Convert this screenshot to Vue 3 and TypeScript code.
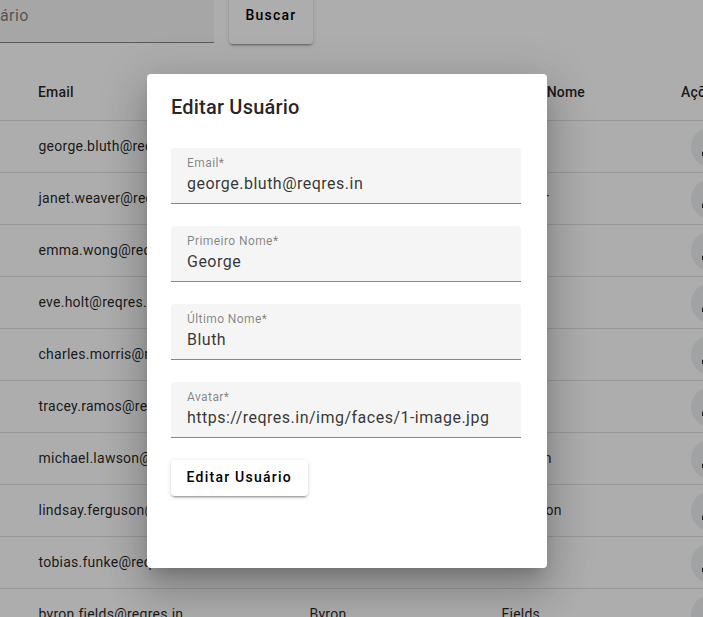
<script setup lang="ts">
interface User {
  email: string
  first: string
  last: string
}

interface Field {
  label: string
  value: string
}

const users: User[] = [
  { email: 'george.bluth@reqres.in', first: 'George', last: 'Bluth' },
  { email: 'janet.weaver@reqres.in', first: 'Janet', last: 'Weaver' },
  { email: 'emma.wong@reqres.in', first: 'Emma', last: 'Wong' },
  { email: 'eve.holt@reqres.in', first: 'Eve', last: 'Holt' },
  { email: 'charles.morris@reqres.in', first: 'Charles', last: 'Morris' },
  { email: 'tracey.ramos@reqres.in', first: 'Tracey', last: 'Ramos' },
  { email: 'michael.lawson@reqres.in', first: 'Michael', last: 'Lawson' },
  { email: 'lindsay.ferguson@reqres.in', first: 'Lindsay', last: 'Ferguson' },
  { email: 'tobias.funke@reqres.in', first: 'Tobias', last: 'Funke' },
  { email: 'byron.fields@reqres.in', first: 'Byron', last: 'Fields' },
]

const fields: Field[] = [
  { label: 'Email*', value: 'george.bluth@reqres.in' },
  { label: 'Primeiro Nome*', value: 'George' },
  { label: 'Último Nome*', value: 'Bluth' },
  { label: 'Avatar*', value: 'https://reqres.in/img/faces/1-image.jpg' },
]
</script>

<template>
  <main class="page">
    <div class="toolbar">
      <div class="search">ário</div>
      <button class="raised buscar" type="button">Buscar</button>
    </div>
    <div class="table">
      <div class="row head">
        <span>Email</span>
        <span>Primeiro Nome</span>
        <span>Último Nome</span>
        <span>Ações</span>
      </div>
      <div v-for="user in users" :key="user.email" class="row">
        <span class="cell">{{ user.email }}</span>
        <span class="cell">{{ user.first }}</span>
        <span class="cell">{{ user.last }}</span>
        <button class="fab" type="button" aria-label="Editar">
          <svg viewBox="0 0 24 24" width="24" height="24">
            <path d="M3 17.25V21h3.75L17.81 9.94l-3.75-3.75L3 17.25zM20.71 7.04a1 1 0 0 0 0-1.41l-2.34-2.34a1 1 0 0 0-1.41 0l-1.83 1.83 3.75 3.75 1.83-1.83z" />
          </svg>
        </button>
      </div>
    </div>
    <div class="backdrop">
      <section class="dialog" role="dialog">
        <h2>Editar Usuário</h2>
        <label v-for="field in fields" :key="field.label" class="field">
          <span class="label">{{ field.label }}</span>
          <input type="text" :value="field.value" />
        </label>
        <button class="raised submit" type="button">Editar Usuário</button>
      </section>
    </div>
  </main>
</template>

<style>
body {
  margin: 0;
  overflow: hidden;
}
</style>

<style scoped>
.page {
  position: relative;
  width: 703px;
  height: 617px;
  overflow: hidden;
  box-sizing: border-box;
  background: #fff;
  font-family: Roboto, sans-serif;
  color: rgba(0, 0, 0, 0.87);
}

.toolbar {
  display: flex;
  align-items: flex-start;
  gap: 15px;
  height: 64px;
}

.search {
  box-sizing: border-box;
  width: 214px;
  height: 43px;
  padding-top: 4px;
  border-bottom: 1px solid rgba(0, 0, 0, 0.46);
  background: #f5f5f5;
  color: rgba(0, 0, 0, 0.52);
  font-size: 16px;
  line-height: 24px;
  letter-spacing: 0.4px;
}

.raised {
  box-sizing: border-box;
  height: 36px;
  padding: 0 16px;
  border: 0;
  border-radius: 4px;
  background: #fff;
  color: #000;
  font-family: inherit;
  font-size: 14px;
  font-weight: 500;
  line-height: 36px;
  letter-spacing: 1.25px;
  white-space: nowrap;
  box-shadow: 0 3px 1px -2px rgba(0, 0, 0, 0.2), 0 2px 2px rgba(0, 0, 0, 0.14), 0 1px 5px rgba(0, 0, 0, 0.12);
}

.buscar {
  width: 84px;
  height: 58px;
  margin-top: -14px;
  line-height: 58px;
}

.submit {
  width: 137px;
  padding: 0 0 2px 15.5px;
  line-height: 34px;
  text-align: left;
}

.table {
  width: 760px;
}

.row {
  display: grid;
  grid-template-columns: 271px 192px 180px 1fr;
  align-items: center;
  box-sizing: border-box;
  height: 52px;
  padding-left: 38.5px;
  border-bottom: 1px solid rgba(0, 0, 0, 0.12);
  font-size: 14px;
  line-height: 20px;
  letter-spacing: 0.25px;
}

.head {
  height: 57px;
  padding-left: 38px;
  font-weight: 500;
  letter-spacing: 0.17px;
}

.cell {
  padding-bottom: 2px;
}

.fab {
  display: flex;
  align-items: center;
  justify-content: center;
  width: 40px;
  height: 40px;
  margin: 1px 0 0 9.5px;
  padding: 0;
  border: 0;
  border-radius: 50%;
  background: #eceff1;
}

.fab svg {
  fill: #222;
}

.backdrop {
  position: absolute;
  inset: 0;
  display: flex;
  align-items: flex-start;
  justify-content: center;
  padding: 74px 9px 0 0;
  background: rgba(0, 0, 0, 0.32);
}

.dialog {
  display: flex;
  flex-direction: column;
  align-items: flex-start;
  box-sizing: border-box;
  width: 400px;
  height: 494px;
  padding: 17px 26px 24px 24px;
  border-radius: 4px;
  background: #fff;
  box-shadow: 0 11px 15px -7px rgba(0, 0, 0, 0.2), 0 24px 38px 3px rgba(0, 0, 0, 0.14), 0 9px 46px 8px rgba(0, 0, 0, 0.12);
}

h2 {
  margin: 0 0 25px;
  font-size: 20px;
  font-weight: 500;
  line-height: 32px;
  letter-spacing: 0.2px;
}

.field {
  display: flex;
  flex-direction: column;
  box-sizing: border-box;
  width: 350px;
  height: 56px;
  margin-bottom: 22px;
  padding: 7px 16px 0;
  border-bottom: 1px solid rgba(0, 0, 0, 0.46);
  border-radius: 4px 4px 0 0;
  background: #f5f5f5;
}

.label {
  height: 16px;
  color: rgba(0, 0, 0, 0.48);
  font-size: 12px;
  line-height: 16px;
  letter-spacing: 0.42px;
}

input {
  width: 100%;
  height: 24px;
  padding: 0;
  border: 0;
  outline: 0;
  background: none;
  color: rgba(0, 0, 0, 0.8);
  font-family: inherit;
  font-size: 16px;
  letter-spacing: 0.49px;
}
</style>
